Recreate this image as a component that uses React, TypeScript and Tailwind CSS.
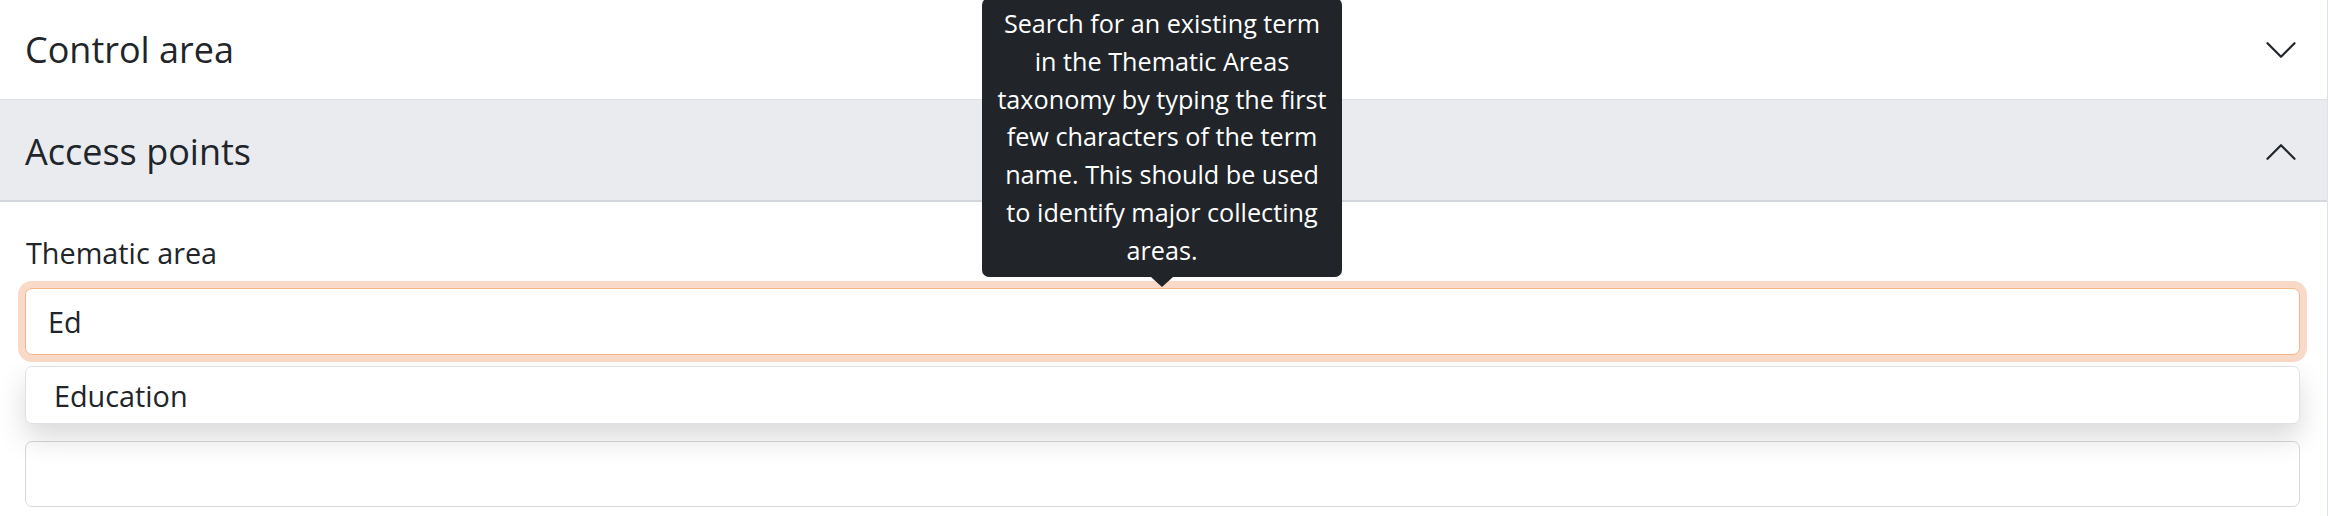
import React from 'react';

const Chevron = ({ up = false }: { up?: boolean }) => (
  <svg
    width="36"
    height="36"
    viewBox="0 0 16 16"
    className={up ? 'rotate-180' : ''}
  >
    <path
      d="M2 5L8 11L14 5"
      fill="none"
      stroke="#212529"
      strokeWidth="1"
      strokeLinecap="round"
      strokeLinejoin="round"
    />
  </svg>
);

const tooltipLines = [
  'Search for an existing term',
  'in the Thematic Areas',
  'taxonomy by typing the first',
  'few characters of the term',
  'name. This should be used',
  'to identify major collecting',
  'areas.',
];

const App: React.FC = () => {
  return (
    <div className="relative w-[2328px] h-[516px] overflow-hidden bg-white text-[#212529] font-['Open_Sans',sans-serif]">
      <div className="h-full border-r border-[#dee2e6]">
        {/* Collapsed section */}
        <div className="h-[100px] flex items-center justify-between pl-[25px] pr-[28px] border-b border-[#dee2e6]">
          <span className="text-[36px] leading-[54px]">Control area</span>
          <Chevron />
        </div>

        {/* Open section */}
        <div className="h-[102px] pt-[3px] flex items-center justify-between pl-[25px] pr-[28px] bg-[#e9ebef] border-b-2 border-[#d3d6da]">
          <span className="text-[36px] leading-[54px]">Access points</span>
          <Chevron up />
        </div>

        <div className="pl-[25px] pr-[27px] pt-[29px] text-[28.8px] leading-[43.2px]">
          <label className="block ml-[1px]">Thematic area</label>

          <div className="mt-[14px] h-[67px] flex items-center px-[22px] rounded-[7px] border-[1.8px] border-[#f5b48a] shadow-[0_0_0_7px_#f9d9c7] bg-white">
            Ed
          </div>

          <div className="relative z-10 mt-[11px] h-[58px] flex items-center pl-[28px] rounded-[7px] border border-[#dee2e6] bg-white shadow-[0_14px_29px_rgba(0,0,0,0.15)]">
            Education
          </div>

          <div className="mt-[17px] h-[66px] rounded-[7px] border border-[#d5d8dc] bg-white" />
        </div>
      </div>

      {/* Tooltip */}
      <div className="absolute left-[982px] top-[-2px] w-[360px]">
        <div className="rounded-[7px] bg-[#212529] px-[8px] py-[7px] text-center text-white text-[25.2px] leading-[37.8px] whitespace-nowrap">
          {tooltipLines.map((line) => (
            <div key={line}>{line}</div>
          ))}
        </div>
        <div className="mx-auto w-0 h-0 border-x-[11px] border-t-[10px] border-x-transparent border-t-[#212529]" />
      </div>
    </div>
  );
};

export default App;
